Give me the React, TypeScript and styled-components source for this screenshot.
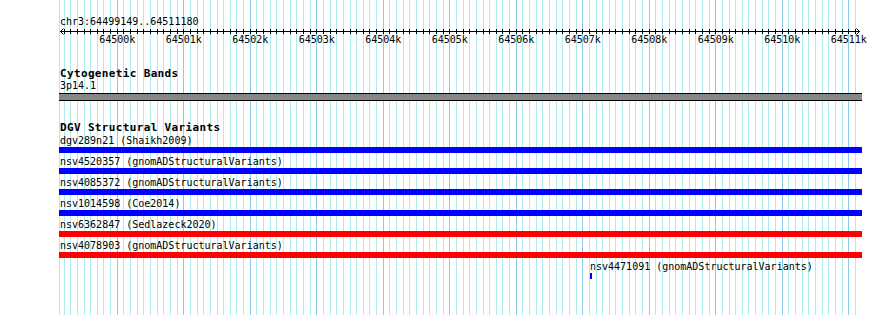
import React from 'react';
import styled, { createGlobalStyle } from 'styled-components';

const START = 64499149;
const END = 64511180;
const VIEW_LEFT = 59;
const VIEW_WIDTH = 803;
const PX_PER_BP = 0.066495;
const ORIGIN = 1.7;

const toX = (bp: number) => ORIGIN + (bp - START) * PX_PER_BP;

const MONO = `"DejaVu Sans Mono", "Liberation Mono", monospace`;

const GlobalStyle = createGlobalStyle`
  html, body { margin: 0; padding: 0; background: #ffffff; }
  body { font-family: ${MONO}; }
`;

const Browser = styled.div`
  position: relative;
  width: 890px;
  height: 315px;
  overflow: hidden;
  background: #ffffff;
`;

const GridLayer = styled.div`
  position: absolute;
  top: 0;
  bottom: 0;
  left: ${VIEW_LEFT}px;
  width: ${VIEW_WIDTH}px;
  pointer-events: none;
`;

const GridLine = styled.div<{ $major?: boolean }>`
  position: absolute;
  top: 0;
  bottom: 0;
  width: 1px;
  background: ${(p) => (p.$major ? '#8ccbe8' : '#aeeaee')};
`;

const View = styled.div`
  position: relative;
  margin-left: ${VIEW_LEFT}px;
  width: ${VIEW_WIDTH}px;
  padding-top: 16px;
  display: flex;
  flex-direction: column;
`;

const RegionLabel = styled.div`
  font: 10px/12px ${MONO};
  color: #000;
  padding-left: 1px;
`;

const RulerSvg = styled.svg`
  display: block;
  width: ${VIEW_WIDTH}px;
  height: 18px;
  overflow: visible;
`;

const Track = styled.section<{ $gap: number }>`
  margin-top: ${(p) => p.$gap}px;
  display: flex;
  flex-direction: column;
`;

const TrackTitle = styled.h2`
  margin: 0;
  font: bold 11px/13px ${MONO};
  letter-spacing: 0.35px;
  color: #000;
  padding-left: 1px;
`;

const FeatureLabel = styled.div`
  font: 10px/12px ${MONO};
  color: #000;
  white-space: pre;
  padding-left: 1px;
`;

const CytoBar = styled.div`
  margin-top: 1px;
  height: 6px;
  border-top: 1px solid #000;
  border-bottom: 1px solid #000;
  background: #878787;
`;

const Rows = styled.div`
  padding-top: 1px;
  display: flex;
  flex-direction: column;
`;

const FeatureRow = styled.div`
  display: flex;
  flex-direction: column;
  align-items: flex-start;
  margin-bottom: 3px;
`;

const FeatureBar = styled.div<{ $kind: 'gain' | 'loss' }>`
  height: 6px;
  background: ${(p) => (p.$kind === 'loss' ? '#ff0000' : '#0000ff')};
`;

type Feature = { name: string; source: string; start: number; end: number; kind: 'gain' | 'loss' };

const features: Feature[] = [
  { name: 'dgv289n21', source: 'Shaikh2009', start: 64400000, end: 64600000, kind: 'gain' },
  { name: 'nsv4520357', source: 'gnomADStructuralVariants', start: 64400000, end: 64600000, kind: 'gain' },
  { name: 'nsv4085372', source: 'gnomADStructuralVariants', start: 64400000, end: 64600000, kind: 'gain' },
  { name: 'nsv1014598', source: 'Coe2014', start: 64400000, end: 64600000, kind: 'gain' },
  { name: 'nsv6362847', source: 'Sedlazeck2020', start: 64400000, end: 64600000, kind: 'loss' },
  { name: 'nsv4078903', source: 'gnomADStructuralVariants', start: 64400000, end: 64600000, kind: 'loss' },
  { name: 'nsv4471091', source: 'gnomADStructuralVariants', start: 64507124, end: 64507154, kind: 'gain' },
];

const gridLines: { x: number; major: boolean }[] = [{ x: 0, major: false }];
for (let bp = 64499200; bp <= END; bp += 100) {
  gridLines.push({ x: Math.floor(toX(bp)), major: bp % 1000 === 0 });
}

const ticks: number[] = [];
for (let bp = 64499200; bp <= END; bp += 100) ticks.push(Math.floor(toX(bp)) + 0.5);

const majors: number[] = [];
for (let bp = 64500000; bp <= END; bp += 1000) majors.push(bp);

function Ruler() {
  const x0 = 1;
  const x1 = 801;
  return (
    <RulerSvg viewBox={`0 0 ${VIEW_WIDTH} 18`}>
      <line x1={x0} y1={3.5} x2={x1} y2={3.5} stroke="#000" strokeWidth={1} />
      <path d={`M${x0 + 3.5} 0.5 L${x0 + 0.5} 3.5 L${x0 + 3.5} 6.5`} fill="none" stroke="#000" strokeWidth={1} />
      <path d={`M${x1 - 3.5} 0.5 L${x1 - 0.5} 3.5 L${x1 - 3.5} 6.5`} fill="none" stroke="#000" strokeWidth={1} />
      {ticks.map((t) => (
        <line key={t} x1={t} y1={1} x2={t} y2={6} stroke="#000" strokeWidth={1} />
      ))}
      {majors.map((bp) => (
        <text
          key={bp}
          x={toX(bp)}
          y={15}
          textAnchor="middle"
          fontFamily={MONO}
          fontSize={10}
          fill="#000"
        >
          {`${bp / 1000}k`}
        </text>
      ))}
    </RulerSvg>
  );
}

export default function App() {
  return (
    <>
      <GlobalStyle />
      <Browser>
        <GridLayer>
          {gridLines.map((g, i) => (
            <GridLine key={i} $major={g.major} style={{ left: g.x }} />
          ))}
        </GridLayer>
        <View>
          <RegionLabel>chr3:64499149..64511180</RegionLabel>
          <Ruler />
          <Track $gap={21}>
            <TrackTitle>Cytogenetic Bands</TrackTitle>
            <FeatureLabel>3p14.1</FeatureLabel>
            <CytoBar />
          </Track>
          <Track $gap={20}>
            <TrackTitle>DGV Structural Variants</TrackTitle>
            <Rows>
              {features.map((f) => {
                const left = Math.max(0, Math.floor(toX(f.start)));
                const right = Math.min(VIEW_WIDTH, Math.max(left + 2, Math.floor(toX(f.end))));
                return (
                  <FeatureRow key={f.name}>
                    <FeatureLabel style={{ marginLeft: Math.max(0, left - 1) }}>
                      {`${f.name} (${f.source})`}
                    </FeatureLabel>
                    <FeatureBar $kind={f.kind} style={{ marginLeft: left, width: right - left }} />
                  </FeatureRow>
                );
              })}
            </Rows>
          </Track>
        </View>
      </Browser>
    </>
  );
}
